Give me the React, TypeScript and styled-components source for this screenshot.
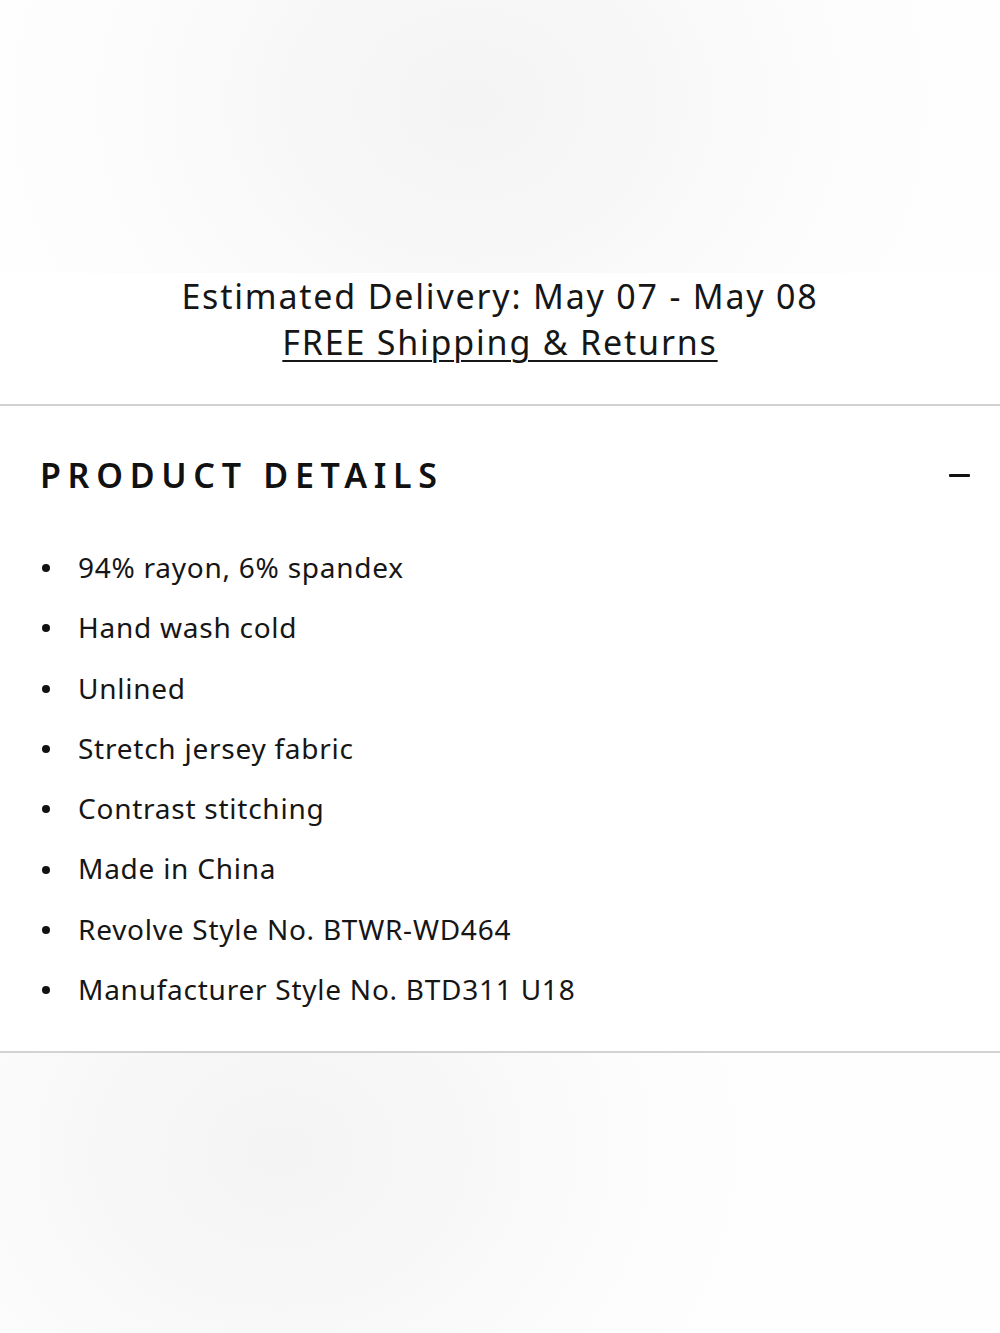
import styled, { createGlobalStyle } from 'styled-components'

const GlobalStyle = createGlobalStyle`
  html, body {
    margin: 0;
    padding: 0;
    background: #fff;
  }
  body {
    font-family: 'Noto Sans', 'Open Sans', sans-serif;
    color: #111;
  }
`

const details = [
  '94% rayon, 6% spandex',
  'Hand wash cold',
  'Unlined',
  'Stretch jersey fabric',
  'Contrast stitching',
  'Made in China',
  'Revolve Style No. BTWR-WD464',
  'Manufacturer Style No. BTD311 U18',
]

export default function App() {
  return (
    <Page>
      <GlobalStyle />
      <Photo $height={273} $focus="47% 38%" />
      <Delivery>
        <p>Estimated Delivery: May 07 - May 08</p>
        <ShippingLink href="#">FREE Shipping &amp; Returns</ShippingLink>
      </Delivery>
      <Accordion>
        <AccordionHeader type="button" aria-expanded="true">
          <span>Product Details</span>
          <MinusIcon />
        </AccordionHeader>
        <DetailList>
          {details.map((d) => (
            <li key={d}>{d}</li>
          ))}
        </DetailList>
      </Accordion>
      <Photo $height={282} $focus="28% 35%" />
    </Page>
  )
}

const Page = styled.main`
  width: 1000px;
  min-height: 1333px;
  display: flex;
  flex-direction: column;
  overflow: hidden;
`

// faded product shot above and below the details block
const Photo = styled.div<{ $height: number; $focus: string }>`
  height: ${(p) => p.$height}px;
  flex-shrink: 0;
  background: radial-gradient(
    ellipse 480px 400px at ${(p) => p.$focus},
    #f4f4f4 0%,
    #f7f7f7 35%,
    #fbfbfb 65%,
    #fefefe 100%
  );
`

const Delivery = styled.section`
  display: flex;
  flex-direction: column;
  align-items: center;
  padding: 0 0 39px;
  border-bottom: 2px solid #d2d2d2;
  font-size: 34px;
  line-height: 46px;
  letter-spacing: 1.8px;
  font-weight: 400;
  color: #161616;

  p {
    margin: 0;
  }
`

const ShippingLink = styled.a`
  color: #161616;
  text-decoration: underline;
  text-underline-offset: 5px;
  text-decoration-thickness: 2px;
`

const Accordion = styled.section`
  border-bottom: 2px solid #d2d2d2;
  padding: 0 0 32px;
`

const AccordionHeader = styled.button`
  width: 100%;
  display: flex;
  align-items: center;
  justify-content: space-between;
  padding: 46px 30px 39px 40px;
  border: 0;
  background: none;
  font-family: inherit;
  font-size: 34px;
  font-weight: 600;
  letter-spacing: 6.7px;
  text-transform: uppercase;
  color: #111;
  cursor: pointer;
`

const MinusIcon = styled.span`
  display: block;
  width: 21px;
  height: 3px;
  border-radius: 1px;
  background: #111;
`

const DetailList = styled.ul`
  margin: 0;
  padding: 0 0 0 78px;
  list-style: none;
  font-size: 28px;
  line-height: 60.3px;
  letter-spacing: 0.75px;
  color: #161616;

  li {
    position: relative;
  }
  li::before {
    content: '';
    position: absolute;
    left: -36px;
    top: 50%;
    width: 8px;
    height: 8px;
    margin-top: -3px;
    border-radius: 50%;
    background: #111;
  }
`
